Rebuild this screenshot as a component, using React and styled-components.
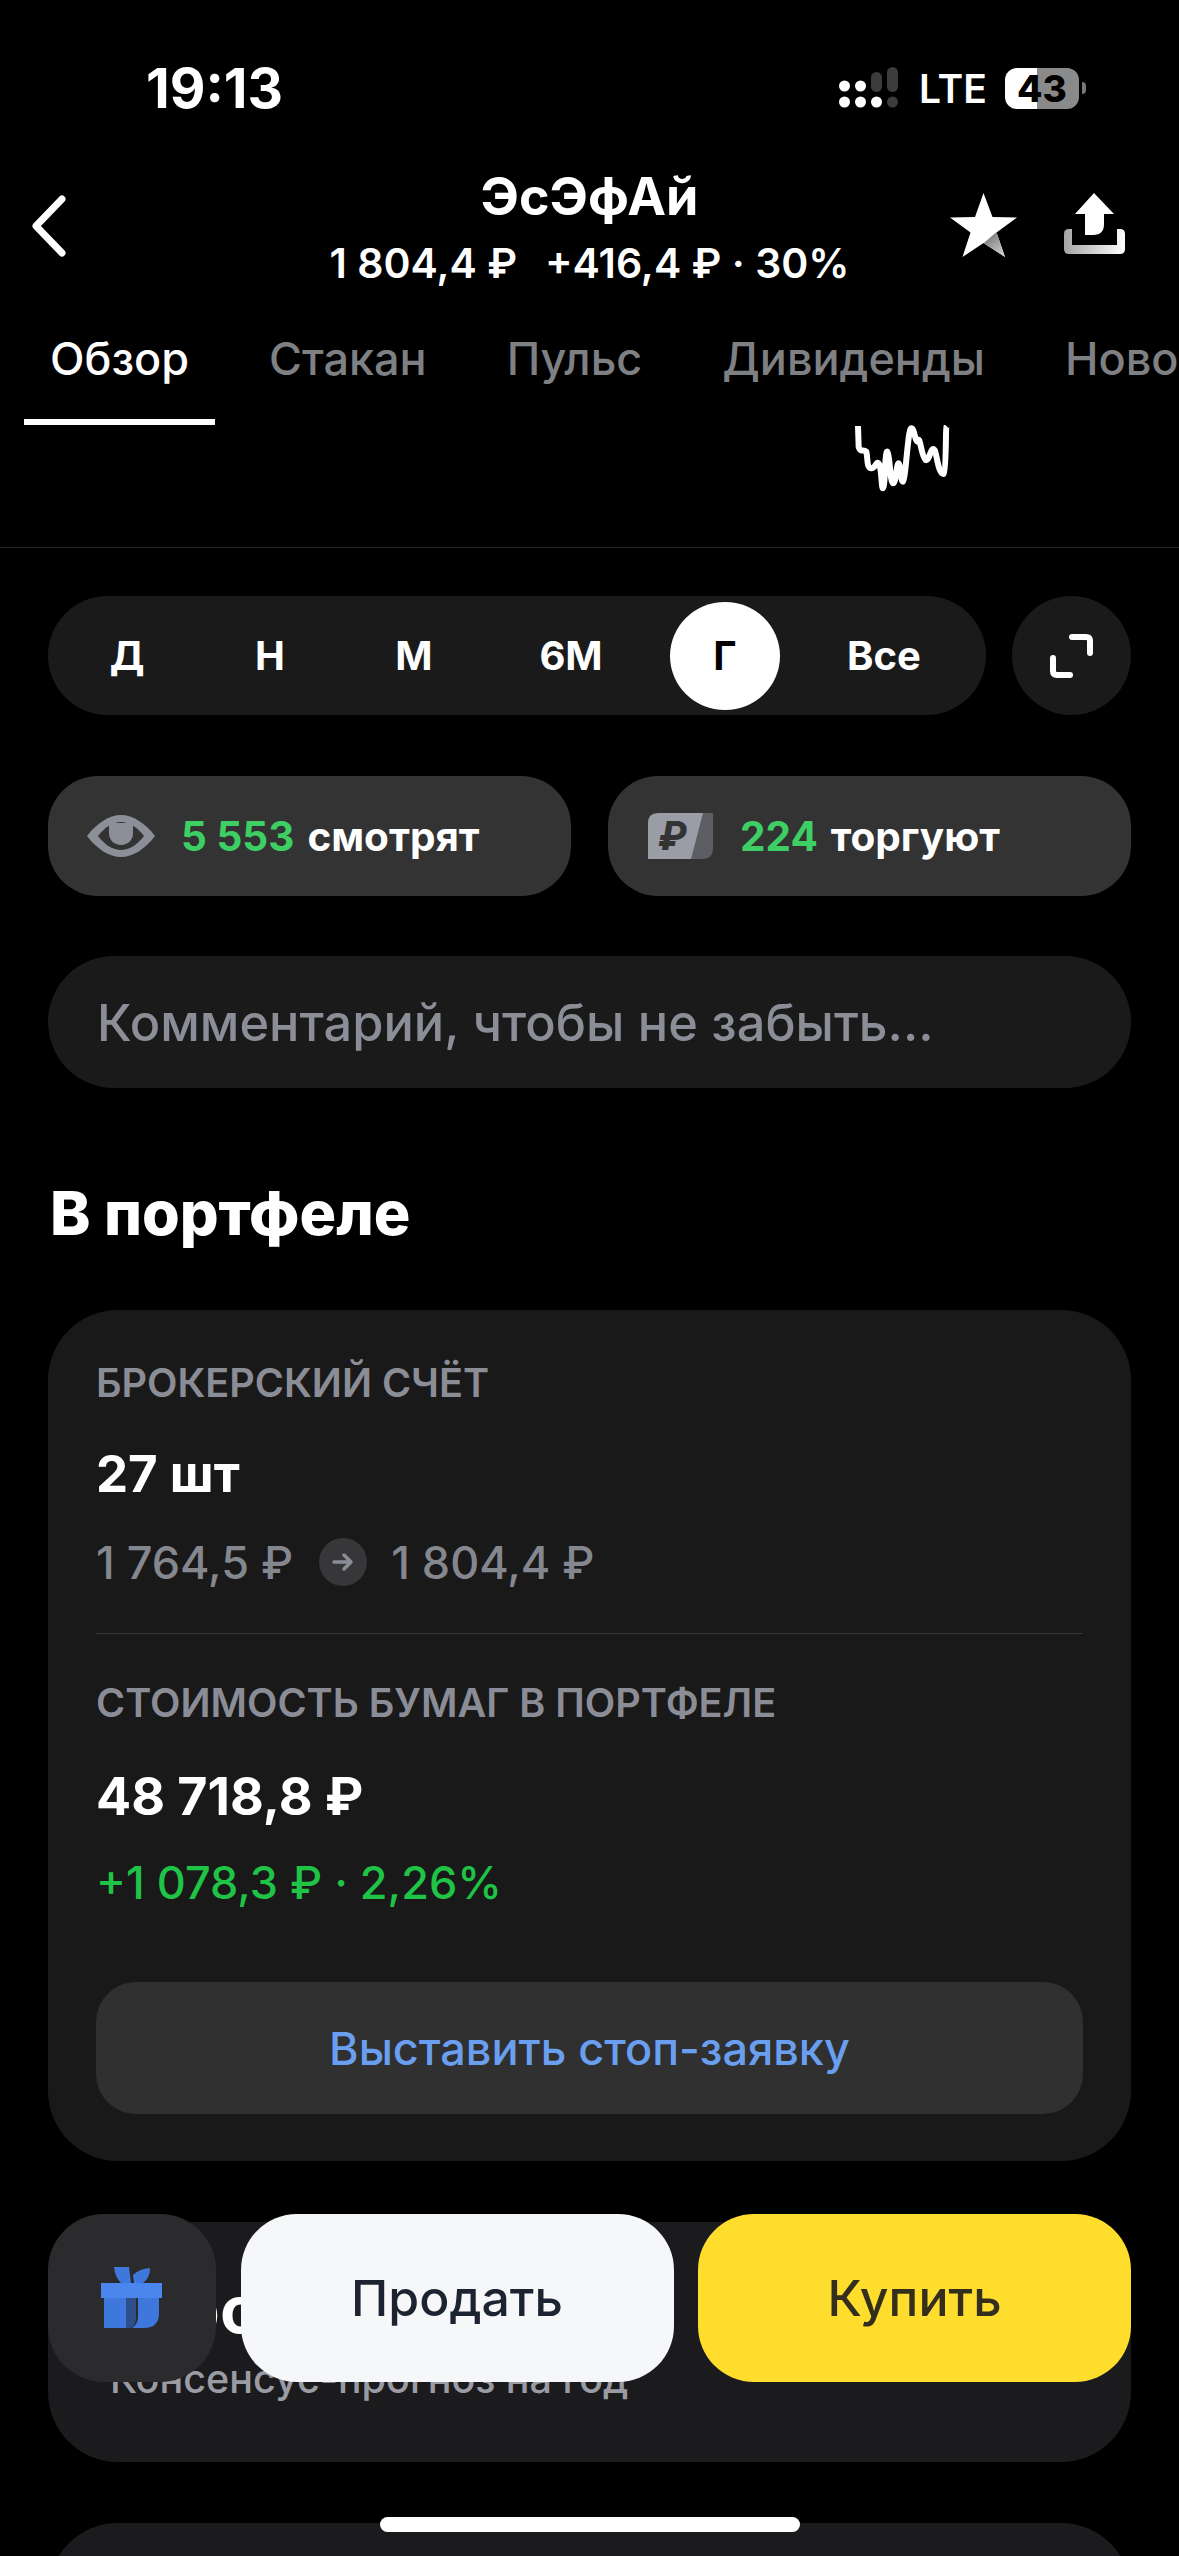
import styled, { createGlobalStyle } from "styled-components";

const GlobalStyle = createGlobalStyle`
  html, body {
    margin: 0;
    padding: 0;
    background: #000;
  }
  * {
    box-sizing: border-box;
  }
`;

const Page = styled.div`
  position: relative;
  width: 1179px;
  height: 2556px;
  overflow: hidden;
  background: #000;
  color: #fff;
  font-family: Inter, "Noto Sans", sans-serif;
`;

const StatusBar = styled.div`
  height: 170px;
  display: flex;
  justify-content: space-between;
  align-items: flex-start;
  padding: 62px 93px 0 146px;
`;

const Time = styled.div`
  font-size: 55px;
  line-height: 52px;
  font-weight: 700;
`;

const StatusRight = styled.div`
  display: flex;
  align-items: center;
  padding-top: 5px;
`;

const Lte = styled.div`
  font-size: 39px;
  line-height: 41px;
  font-weight: 600;
  margin: 0 22px 0 20px;
  width: 64px;
`;

const Battery = styled.div`
  width: 74px;
  height: 41px;
  border-radius: 12px;
  background: linear-gradient(90deg, #fff 0 43%, #8a8a8a 43% 100%);
  color: #000;
  font-size: 37px;
  line-height: 41px;
  font-weight: 800;
  text-align: center;
`;

const BatteryNub = styled.div`
  width: 4px;
  height: 12px;
  margin-left: 3px;
  border-radius: 0 4px 4px 0;
  background: #777;
`;

const Header = styled.div`
  height: 150px;
  display: grid;
  grid-template-columns: 1fr auto 1fr;
`;

const BackButton = styled.div`
  padding: 24px 0 0 28px;
`;

const TitleBlock = styled.div`
  text-align: center;
`;

const Title = styled.div`
  font-size: 52px;
  line-height: 54px;
  font-weight: 700;
`;

const Subtitle = styled.div`
  display: flex;
  justify-content: center;
  gap: 28px;
  margin-top: 16px;
  font-size: 41px;
  line-height: 46px;
  font-weight: 600;
`;

const Actions = styled.div`
  display: flex;
  justify-content: flex-end;
  align-items: flex-start;
  gap: 46px;
  padding: 23px 53px 0 0;
`;

const Tabs = styled.div`
  height: 105px;
  display: flex;
  gap: 28px;
  padding-left: 24px;
  overflow: hidden;
`;

const Tab = styled.div`
  flex: none;
  height: 105px;
  padding: 14px 26px 0;
  font-size: 45px;
  line-height: 50px;
  font-weight: 500;
  color: ${({ $active }) => ($active ? "#fff" : "#7f8084")};
  border-bottom: 6px solid ${({ $active }) => ($active ? "#fff" : "transparent")};
`;

const ChartStrip = styled.div`
  height: 123px;
  padding-left: 853px;
  border-bottom: 1px solid #242426;
`;

const Content = styled.div`
  padding: 48px 48px 0 48px;
`;

const RangeRow = styled.div`
  display: flex;
  gap: 26px;
`;

const RangeBar = styled.div`
  flex: 1;
  height: 119px;
  display: grid;
  grid-template-columns: 158px 128px 160px 154px 154px 164px;
  align-items: center;
  justify-items: center;
  border-radius: 60px;
  background: #1a1a1b;
`;

const RangeItem = styled.div`
  width: 110px;
  height: 108px;
  display: flex;
  align-items: center;
  justify-content: center;
  border-radius: 50%;
  font-size: 40px;
  font-weight: 700;
  background: ${({ $active }) => ($active ? "#fff" : "transparent")};
  color: ${({ $active }) => ($active ? "#000" : "#fff")};
`;

const ExpandButton = styled.div`
  width: 119px;
  height: 119px;
  display: flex;
  align-items: center;
  justify-content: center;
  border-radius: 50%;
  background: #1a1a1b;
`;

const Chips = styled.div`
  display: grid;
  grid-template-columns: 523px 523px;
  justify-content: space-between;
  margin-top: 61px;
`;

const Chip = styled.div`
  height: 120px;
  display: flex;
  align-items: center;
  padding-left: ${({ $left }) => $left}px;
  border-radius: 50px;
  background: #333334;
  font-size: 40.5px;
  font-weight: 700;
`;

const ChipCount = styled.span`
  color: #3ecf64;
  margin: 0 13px 0 ${({ $gap }) => $gap}px;
`;

const CommentBox = styled.div`
  height: 132px;
  display: flex;
  align-items: center;
  margin-top: 60px;
  padding-left: 49px;
  border-radius: 66px;
  background: #1a1a1b;
  color: #8c8e97;
  font-size: 50.5px;
  font-weight: 500;
`;

const SectionTitle = styled.div`
  margin-top: 90px;
  height: 72px;
  font-size: 61px;
  line-height: 70px;
  font-weight: 800;
  padding-left: 2px;
`;

const Card = styled.div`
  margin-top: ${({ $top }) => $top}px;
  border-radius: 70px;
  background: #19191a;
`;

const PortfolioCard = styled(Card)`
  height: 851px;
  padding: 50px 48px 0 48px;
`;

const Label = styled.div`
  font-size: 39.6px;
  line-height: 46px;
  font-weight: 600;
  color: #8b8d96;
`;

const Quantity = styled.div`
  margin-top: 39px;
  font-size: 51px;
  line-height: 58px;
  font-weight: 700;
`;

const PriceRow = styled.div`
  display: flex;
  align-items: center;
  margin-top: 35px;
  height: 48px;
  font-size: 45px;
  font-weight: 500;
  color: #85878f;
`;

const ArrowDot = styled.div`
  width: 48px;
  height: 48px;
  margin: 0 24px 0 26px;
  display: flex;
  align-items: center;
  justify-content: center;
  border-radius: 50%;
  background: #37373a;
`;

const Divider = styled.div`
  height: 1px;
  margin: 47px 0 46px;
  background: #37373a;
`;

const Total = styled.div`
  margin-top: 41px;
  font-size: 52px;
  line-height: 60px;
  font-weight: 700;
`;

const Gain = styled.div`
  margin-top: 30px;
  font-size: 45px;
  line-height: 52px;
  font-weight: 500;
  color: #1fc447;
`;

const StopButton = styled.div`
  height: 132px;
  margin-top: 73px;
  display: flex;
  align-items: center;
  justify-content: center;
  border-radius: 40px;
  background: #303031;
  color: #6a9ff0;
  font-size: 45px;
  font-weight: 500;
`;

const ForecastCard = styled(Card)`
  height: 240px;
  padding: 51px 0 0 62px;
  background: #1b1b1d;
`;

const ForecastTitle = styled.div`
  padding-left: 19px;
  font-size: 66px;
  line-height: 72px;
  font-weight: 700;
  white-space: nowrap;
`;

const ForecastNote = styled.div`
  margin-top: 10px;
  font-size: 39.5px;
  line-height: 48px;
  font-weight: 500;
  color: #9b9ca3;
`;

const NextCard = styled(Card)`
  height: 300px;
  background: #1b1b1d;
`;

const BottomBar = styled.div`
  position: absolute;
  top: 2214px;
  left: 48px;
  right: 48px;
  display: grid;
  grid-template-columns: 168px 433px 433px;
  justify-content: space-between;
  height: 168px;
`;

const GiftButton = styled.div`
  display: flex;
  align-items: center;
  justify-content: center;
  border-radius: 56px;
  background: #2b2b2d;
`;

const TradeButton = styled.div`
  display: flex;
  align-items: center;
  justify-content: center;
  border-radius: 56px;
  font-size: 50px;
  font-weight: 500;
  background: ${({ $buy }) => ($buy ? "#ffdd2d" : "#f6f7f8")};
  color: ${({ $buy }) => ($buy ? "#332f1c" : "#1c2331")};
`;

const HomeIndicator = styled.div`
  position: absolute;
  top: 2517px;
  left: 380px;
  width: 420px;
  height: 15px;
  border-radius: 8px;
  background: #fff;
`;

const SignalIcon = () => (
  <svg width="60" height="42" viewBox="0 0 60 42">
    <circle cx="5.5" cy="19" r="5.5" fill="#fff" />
    <circle cx="5.5" cy="35" r="5.5" fill="#fff" />
    <circle cx="21.5" cy="19" r="5.5" fill="#fff" />
    <circle cx="21.5" cy="35" r="5.5" fill="#fff" />
    <rect x="32" y="5" width="11" height="20" rx="5.5" fill="#3c3c3c" />
    <circle cx="37.5" cy="35" r="5.5" fill="#fff" />
    <rect x="48" y="0" width="11" height="25" rx="5.5" fill="#3c3c3c" />
    <circle cx="53.5" cy="35" r="5.5" fill="#3c3c3c" />
  </svg>
);

const BackIcon = () => (
  <svg width="40" height="64" viewBox="0 0 40 64">
    <path d="M34 5 L8 32 L34 59" fill="none" stroke="#fff" strokeWidth="7" strokeLinecap="round" strokeLinejoin="round" />
  </svg>
);

const StarIcon = () => (
  <svg width="68" height="65" viewBox="0 0 68 65">
    <defs>
      <linearGradient id="starFade" x1="0.2" y1="0" x2="0.8" y2="1">
        <stop offset="0" stopColor="#6f6f6f" />
        <stop offset="1" stopColor="#d0d0d0" />
      </linearGradient>
    </defs>
    <path d="M33.5 0 L42.5 24 L67 24.5 L46.5 39.5 L55 64 L33.5 50 L12.5 64 L20.5 39.5 L0 24.5 L25 24 Z" fill="#fff" />
    <path d="M32 51.5 L46.5 39 L55 64 L33.5 50 Z" fill="url(#starFade)" />
  </svg>
);

const ShareIcon = () => (
  <svg width="62" height="62" viewBox="0 0 62 62">
    <defs>
      <linearGradient id="trayFade" x1="0" y1="0" x2="1" y2="0">
        <stop offset="0" stopColor="#a4a4a4" />
        <stop offset="1" stopColor="#fff" />
      </linearGradient>
    </defs>
    <path d="M30 0 L50 21 L40 21 L40 31 Q40 42 29 42 L21 42 L21 21 L11 21 Z" fill="#fff" />
    <path d="M0 41 Q0 36 5 36 L8 36 L8 52 L53 52 L53 36 L56 36 Q61 36 61 41 L61 56 Q61 61 56 61 L5 61 Q0 61 0 56 Z" fill="url(#trayFade)" />
  </svg>
);

const Sparkline = () => (
  <svg width="100" height="70" viewBox="100 75 300 210">
    <path
      d="M115 78 L117 140 C122 160 130 145 140 155 C145 175 140 205 155 205 C170 205 170 175 180 195 C187 225 185 265 190 265 C197 265 195 150 203 155 C212 165 210 245 220 250 C230 250 230 190 237 190 C245 195 242 245 250 245 C258 240 265 80 275 85 C285 85 285 125 295 125 C300 100 305 170 318 180 C330 185 333 135 345 150 C352 165 355 220 372 222 C380 215 378 80 380 78"
      fill="none"
      stroke="#fff"
      strokeWidth="18"
      strokeLinejoin="round"
    />
  </svg>
);

const ExpandIcon = () => (
  <svg width="44" height="44" viewBox="0 0 44 44">
    <path d="M22 3 L36 3 Q40 3 40 7 L40 19 M3 24 L3 37 Q3 41 7 41 L20 41" fill="none" stroke="#fff" strokeWidth="6" strokeLinecap="round" />
  </svg>
);

const EyeIcon = () => (
  <svg width="68" height="42" viewBox="0 0 68 42">
    <path d="M0 21 C10 8 22 0 34 0 C46 0 58 8 68 21 C58 34 46 42 34 42 C22 42 10 34 0 21 Z" fill="#8c8f98" />
    <path d="M11 21 C18 12 26 7 34 7 C42 7 50 12 57 21 C50 30 42 35 34 35 C26 35 18 30 11 21 Z" fill="#333334" />
    <path d="M22 8 L46 8 L46 18 C46 25 41 30 34 30 C27 30 22 25 22 18 Z" fill="#8c8f98" />
  </svg>
);

const RubleCardIcon = () => (
  <svg width="66" height="48" viewBox="0 0 66 48">
    <path d="M50 1 L65 1 L65 36 Q65 47 54 47 L38 47 Z" fill="#5c5e63" />
    <path d="M10 1 L55 1 L43 47 L0 47 L0 11 Q0 1 10 1 Z" fill="#9a9da6" />
    <text x="25" y="38" fontSize="40" fontWeight="800" fontStyle="italic" fontFamily="Roboto, sans-serif" textAnchor="middle" fill="#333334">₽</text>
  </svg>
);

const ArrowIcon = () => (
  <svg width="22" height="20" viewBox="0 0 22 20">
    <path d="M2 10 L19 10 M12 3 L19 10 L12 17" fill="none" stroke="#8b8d96" strokeWidth="3.5" strokeLinecap="round" strokeLinejoin="round" />
  </svg>
);

const GiftIcon = () => (
  <svg width="62" height="62" viewBox="0 0 62 62">
    <path d="M13 0 L28 0 L30 16 L20 16 Q14 10 13 0 Z M33 16 L32 8 Q38 2 49 1 Q49 11 42 16 Z" fill="#3f78dd" />
    <rect x="0" y="16" width="61" height="15" fill="#4b86ee" />
    <path d="M3 31 L25 31 L25 61 L3 61 Z" fill="#3f78dd" />
    <path d="M25 31 L35 31 L35 50 Q35 58 30 61 L25 61 Z" fill="#2f4f8c" />
    <path d="M37 31 L58 31 L58 46 Q58 61 43 61 L31 61 Q37 57 37 50 Z" fill="#3f78dd" />
  </svg>
);

const periods = ["Д", "Н", "М", "6М", "Г", "Все"];
const tabs = ["Обзор", "Стакан", "Пульс", "Дивиденды", "Новости"];

export default function App() {
  return (
    <Page>
      <GlobalStyle />
      <StatusBar>
        <Time>19:13</Time>
        <StatusRight>
          <SignalIcon />
          <Lte>LTE</Lte>
          <Battery>43</Battery>
          <BatteryNub />
        </StatusRight>
      </StatusBar>

      <Header>
        <BackButton>
          <BackIcon />
        </BackButton>
        <TitleBlock>
          <Title>ЭсЭфАй</Title>
          <Subtitle>
            <span>1 804,4 ₽</span>
            <span>+416,4 ₽ · 30%</span>
          </Subtitle>
        </TitleBlock>
        <Actions>
          <StarIcon />
          <ShareIcon />
        </Actions>
      </Header>

      <Tabs>
        {tabs.map((tab, i) => (
          <Tab key={tab} $active={i === 0}>
            {tab}
          </Tab>
        ))}
      </Tabs>

      <ChartStrip>
        <Sparkline />
      </ChartStrip>

      <Content>
        <RangeRow>
          <RangeBar>
            {periods.map((period) => (
              <RangeItem key={period} $active={period === "Г"}>
                {period}
              </RangeItem>
            ))}
          </RangeBar>
          <ExpandButton>
            <ExpandIcon />
          </ExpandButton>
        </RangeRow>

        <Chips>
          <Chip $left={39}>
            <EyeIcon />
            <ChipCount $gap={26}>5 553</ChipCount>
            смотрят
          </Chip>
          <Chip $left={40}>
            <RubleCardIcon />
            <ChipCount $gap={26}>224</ChipCount>
            торгуют
          </Chip>
        </Chips>

        <CommentBox>Комментарий, чтобы не забыть...</CommentBox>

        <SectionTitle>В портфеле</SectionTitle>

        <PortfolioCard $top={60}>
          <Label>БРОКЕРСКИЙ СЧЁТ</Label>
          <Quantity>27 шт</Quantity>
          <PriceRow>
            1 764,5 ₽
            <ArrowDot>
              <ArrowIcon />
            </ArrowDot>
            1 804,4 ₽
          </PriceRow>
          <Divider />
          <Label>СТОИМОСТЬ БУМАГ В ПОРТФЕЛЕ</Label>
          <Total>48 718,8 ₽</Total>
          <Gain>+1 078,3 ₽ · 2,26%</Gain>
          <StopButton>Выставить стоп-заявку</StopButton>
        </PortfolioCard>

        <ForecastCard $top={61}>
          <ForecastTitle>Прогноз</ForecastTitle>
          <ForecastNote>Консенсус-прогноз на год</ForecastNote>
        </ForecastCard>

        <NextCard $top={61} />
      </Content>

      <BottomBar>
        <GiftButton>
          <GiftIcon />
        </GiftButton>
        <TradeButton>Продать</TradeButton>
        <TradeButton $buy>Купить</TradeButton>
      </BottomBar>

      <HomeIndicator />
    </Page>
  );
}
